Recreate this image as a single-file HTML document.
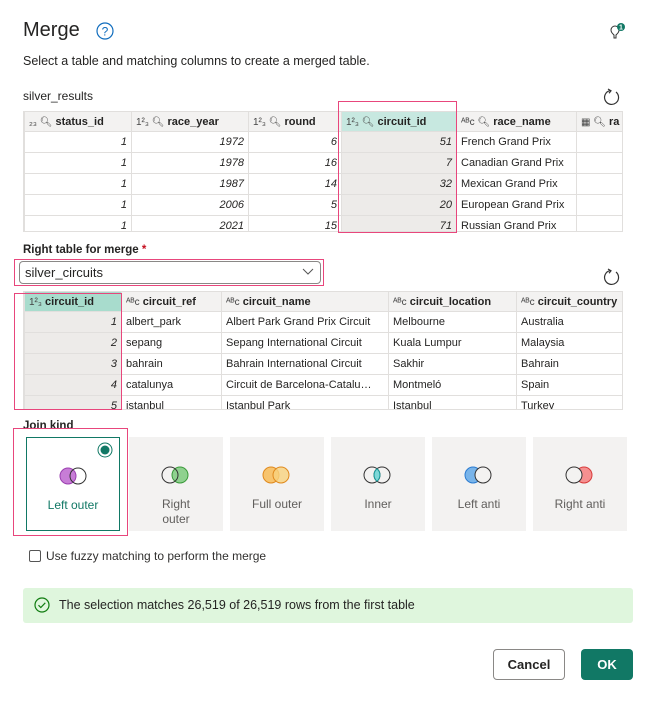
<!DOCTYPE html>
<html><head><meta charset="utf-8"><style>
*{box-sizing:border-box;margin:0;padding:0}
body{width:656px;height:702px;background:#fff;font-family:"Liberation Sans",sans-serif;color:#252423;position:relative;overflow:hidden}
.a{position:absolute}
.tw{position:absolute;overflow:hidden;border-right:1px solid #e1dfdd;border-left:1px solid #e1dfdd}
table{border-collapse:collapse;table-layout:fixed;font-size:11px}
td,th{border:1px solid #e1dfdd;height:21px;padding:0 4px;white-space:nowrap;overflow:hidden}
th{height:20px;background:#f3f2f1;text-align:left;font-weight:bold;color:#252423}
td.n{text-align:right;font-style:italic}
.hl{background:#edebe9}
th.sel{background:#c7e8e0}
th.sel2{background:#a8dccd}
.pink{position:absolute;border:1.5px solid #e8467c}
.ic{font-weight:normal;font-size:10px;color:#444}
.card{position:absolute;top:437px;width:94px;height:94px;background:#f3f2f1;text-align:center;font-size:12px;color:#605e5c}
.card svg{position:absolute;left:31px;top:28px}
.card span{position:absolute;left:0;right:0;top:60px;line-height:15px}
</style></head><body>
<div class="a" style="left:23px;top:19px;font-size:20px;">Merge</div>
<svg class="a" style="left:96px;top:22px" width="18" height="18"><circle cx="9" cy="9" r="8" fill="none" stroke="#0f6cbd" stroke-width="1.2"/><text x="9" y="13.5" font-size="12" text-anchor="middle" fill="#0f6cbd" font-family="Liberation Sans">?</text></svg>
<svg class="a" style="left:608px;top:22px" width="20" height="20"><path d="M6 13c-2-2-3-3-3-5a4 4 0 0 1 8 0c0 2-1 3-3 5v3H6z" fill="none" stroke="#333" stroke-width="1"/><circle cx="13" cy="5" r="4" fill="#117865"/><text x="13" y="7.5" font-size="7" fill="#fff" text-anchor="middle" font-weight="bold">1</text></svg>
<div class="a" style="left:23px;top:54px;font-size:12.5px">Select a table and matching columns to create a merged table.</div>
<div class="a" style="left:23px;top:89px;font-size:12px">silver_results</div>
<svg class="a" style="left:603px;top:88px" width="18" height="18"><path d="M13 4A7 7 0 1 1 7 2.6" fill="none" stroke="#333" stroke-width="1.2"/><path d="M5 1l3 1.8-2 2.5" fill="none" stroke="#333" stroke-width="1.2"/></svg>

<div class="tw" style="left:23px;top:111px;width:600px;height:121px;border-bottom:1px solid #e1dfdd">
<table style="width:650px">
<colgroup><col style="width:107px"><col style="width:117px"><col style="width:93px"><col style="width:115px"><col style="width:120px"><col style="width:98px"></colgroup>
<tr><th><span class="ic">₂₃ 🔍︎</span> status_id</th><th><span class="ic">1²₃ 🔍︎</span> race_year</th><th><span class="ic">1²₃ 🔍︎</span> round</th><th class="sel"><span class="ic">1²₃ 🔍︎</span> circuit_id</th><th><span class="ic">ᴬᴮc 🔍︎</span> race_name</th><th><span class="ic">▦ 🔍︎</span> ra</th></tr>
<tr><td class="n">1</td><td class="n">1972</td><td class="n">6</td><td class="n hl">51</td><td>French Grand Prix</td><td></td></tr>
<tr><td class="n">1</td><td class="n">1978</td><td class="n">16</td><td class="n hl">7</td><td>Canadian Grand Prix</td><td></td></tr>
<tr><td class="n">1</td><td class="n">1987</td><td class="n">14</td><td class="n hl">32</td><td>Mexican Grand Prix</td><td></td></tr>
<tr><td class="n">1</td><td class="n">2006</td><td class="n">5</td><td class="n hl">20</td><td>European Grand Prix</td><td></td></tr>
<tr><td class="n">1</td><td class="n">2021</td><td class="n">15</td><td class="n hl">71</td><td>Russian Grand Prix</td><td></td></tr>
</table></div>
<div class="pink" style="left:338px;top:101px;width:119px;height:132px"></div>

<div class="a" style="left:23px;top:244px;font-size:11.5px;font-weight:bold">Right table for merge <span style="color:#c50f1f">*</span></div>
<div class="a" style="left:19px;top:261px;width:302px;height:23px;border:1px solid #8a8886;border-radius:4px;font-size:13px;padding:3px 5px">silver_circuits</div>
<svg class="a" style="left:302px;top:267px" width="12" height="10"><path d="M1 2l5 5 5-5" fill="none" stroke="#555" stroke-width="1"/></svg>
<div class="pink" style="left:14px;top:259px;width:310px;height:27px"></div>
<svg class="a" style="left:603px;top:268px" width="18" height="18"><path d="M13 4A7 7 0 1 1 7 2.6" fill="none" stroke="#333" stroke-width="1.2"/><path d="M5 1l3 1.8-2 2.5" fill="none" stroke="#333" stroke-width="1.2"/></svg>

<div class="tw" style="left:23px;top:291px;width:600px;height:119px;border-bottom:1px solid #e1dfdd">
<table style="width:600px">
<colgroup><col style="width:97px"><col style="width:100px"><col style="width:167px"><col style="width:128px"><col style="width:108px"></colgroup>
<tr><th class="sel2"><span class="ic">1²₃</span> circuit_id</th><th><span class="ic">ᴬᴮc</span> circuit_ref</th><th><span class="ic">ᴬᴮc</span> circuit_name</th><th><span class="ic">ᴬᴮc</span> circuit_location</th><th><span class="ic">ᴬᴮc</span> circuit_country</th></tr>
<tr><td class="n hl">1</td><td>albert_park</td><td>Albert Park Grand Prix Circuit</td><td>Melbourne</td><td>Australia</td></tr>
<tr><td class="n hl">2</td><td>sepang</td><td>Sepang International Circuit</td><td>Kuala Lumpur</td><td>Malaysia</td></tr>
<tr><td class="n hl">3</td><td>bahrain</td><td>Bahrain International Circuit</td><td>Sakhir</td><td>Bahrain</td></tr>
<tr><td class="n hl">4</td><td>catalunya</td><td>Circuit de Barcelona-Catalu…</td><td>Montmeló</td><td>Spain</td></tr>
<tr><td class="n hl">5</td><td>istanbul</td><td>Istanbul Park</td><td>Istanbul</td><td>Turkey</td></tr>
</table></div>
<div class="pink" style="left:14px;top:293px;width:108px;height:117px"></div>

<div class="a" style="left:23px;top:420px;font-size:11.5px;font-weight:bold">Join kind</div>
<div class="card" style="left:26px;background:#fff;border:1.5px solid #117865;color:#117865"><svg width="32" height="20"><circle cx="10" cy="10" r="8" fill="#c77dd6" stroke="#9b3fb0"/><circle cx="20" cy="10" r="8" fill="none" stroke="#333"/></svg><span>Left outer</span>
<svg style="left:70px;top:4px" width="16" height="16"><circle cx="8" cy="8" r="7" fill="#fff" stroke="#117865"/><circle cx="8" cy="8" r="4.5" fill="#117865"/></svg></div>
<div class="card" style="left:129px"><svg width="32" height="20"><circle cx="20" cy="10" r="8" fill="#8fd18f" stroke="#3a9a3a"/><circle cx="10" cy="10" r="8" fill="none" stroke="#333"/></svg><span>Right<br>outer</span></div>
<div class="card" style="left:230px"><svg width="32" height="20"><circle cx="10" cy="10" r="8" fill="#f7c46e" stroke="#e08a1e"/><circle cx="20" cy="10" r="8" fill="#f7d27e" fill-opacity=".8" stroke="#e08a1e"/></svg><span>Full outer</span></div>
<div class="card" style="left:331px"><svg width="32" height="20"><circle cx="10" cy="10" r="8" fill="none" stroke="#333"/><circle cx="20" cy="10" r="8" fill="none" stroke="#333"/><path d="M15 3.8a8 8 0 0 1 0 12.4a8 8 0 0 1 0-12.4z" fill="#7fd8d8" stroke="#1a9a9a"/></svg><span>Inner</span></div>
<div class="card" style="left:432px"><svg width="32" height="20"><circle cx="10" cy="10" r="8" fill="#78b4ea" stroke="#2b7bd0"/><circle cx="20" cy="10" r="8" fill="#f3f2f1" stroke="#333"/></svg><span>Left anti</span></div>
<div class="card" style="left:533px"><svg width="32" height="20"><circle cx="20" cy="10" r="8" fill="#f59090" stroke="#d83b3b"/><circle cx="10" cy="10" r="8" fill="#f3f2f1" stroke="#333"/></svg><span>Right anti</span></div>
<div class="pink" style="left:13px;top:428px;width:115px;height:108px"></div>

<div class="a" style="left:29px;top:550px;width:12px;height:12px;border:1px solid #555;border-radius:2px"></div>
<div class="a" style="left:46px;top:549px;font-size:12px;color:#323130">Use fuzzy matching to perform the merge</div>

<div class="a" style="left:23px;top:588px;width:610px;height:35px;background:#dff6dd;border-radius:3px"></div>
<svg class="a" style="left:34px;top:597px" width="16" height="16"><circle cx="8" cy="8" r="7" fill="none" stroke="#107c10" stroke-width="1.2"/><path d="M4.5 8.2l2.3 2.3 4.5-4.7" fill="none" stroke="#107c10" stroke-width="1.2"/></svg>
<div class="a" style="left:59px;top:598px;font-size:12.5px">The selection matches 26,519 of 26,519 rows from the first table</div>

<div class="a" style="left:493px;top:649px;width:72px;height:31px;border:1px solid #8a8886;border-radius:4px;font-size:13px;font-weight:bold;text-align:center;line-height:29px">Cancel</div>
<div class="a" style="left:581px;top:649px;width:52px;height:31px;background:#117865;border-radius:4px;font-size:13px;font-weight:bold;text-align:center;line-height:31px;color:#fff">OK</div>
</body></html>
